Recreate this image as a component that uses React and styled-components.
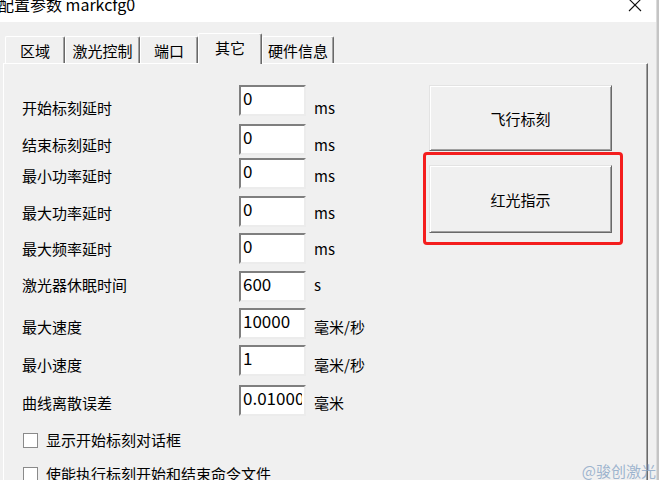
import React from 'react';
import styled, { createGlobalStyle } from 'styled-components';

const GlobalStyle = createGlobalStyle`
  html, body {
    margin: 0;
    padding: 0;
    background: #c4c4c4;
  }

  body {
    font-family: "Noto Sans CJK SC", "Noto Sans", sans-serif;
    color: #000;
  }
`;

const TABS = ['区域', '激光控制', '端口', '其它', '硬件信息'];
const TAB_WIDTHS = [60, 75, 58, 64, 72];
const ACTIVE_TAB = 3;

// mt = space above the row, dy = how far the label sits below the box centre
const ROWS = [
  { label: '开始标刻延时', value: '0', unit: 'ms', mt: 21, dy: 7 },
  { label: '结束标刻延时', value: '0', unit: 'ms', mt: 8, dy: 5 },
  { label: '最小功率延时', value: '0', unit: 'ms', mt: 3, dy: 2 },
  { label: '最大功率延时', value: '0', unit: 'ms', mt: 7, dy: 1 },
  { label: '最大频率延时', value: '0', unit: 'ms', mt: 6, dy: 0 },
  { label: '激光器休眠时间', value: '600', unit: 's', mt: 7, dy: -2 },
  { label: '最大速度', value: '10000', unit: '毫米/秒', mt: 6, dy: 3 },
  { label: '最小速度', value: '1', unit: '毫米/秒', mt: 6, dy: 4 },
  { label: '曲线离散误差', value: '0.010000', unit: '毫米', mt: 9, dy: 2 },
];

const CHECKS = [
  { label: '显示开始标刻对话框', mt: 16 },
  { label: '使能执行标刻开始和结束命令文件', mt: 18 },
];

const App = () => {
  return (
    <>
      <GlobalStyle />
      <Screen>
        <Window>
          <TitleBar>
            <Title>配置参数 markcfg0</Title>
            <CloseIcon viewBox="0 0 14 14">
              <path d="M1 1 L13 13 M13 1 L1 13" stroke="#111" strokeWidth="1.1" />
            </CloseIcon>
          </TitleBar>

          <Body>
            <TabStrip>
              {TABS.map((tab, i) => (
                <Tab key={tab} $active={i === ACTIVE_TAB} $width={TAB_WIDTHS[i]}>
                  {tab}
                </Tab>
              ))}
            </TabStrip>

            <TabPanel>
              <FormColumn>
                {ROWS.map((row) => (
                  <FieldRow key={row.label} $mt={row.mt}>
                    <FieldLabel $dy={row.dy}>{row.label}</FieldLabel>
                    <FieldInput readOnly defaultValue={row.value} />
                    <FieldUnit $dy={row.dy}>{row.unit}</FieldUnit>
                  </FieldRow>
                ))}

                {CHECKS.map((check) => (
                  <CheckRow key={check.label} $mt={check.mt}>
                    <CheckBox />
                    <CheckLabel>{check.label}</CheckLabel>
                  </CheckRow>
                ))}
              </FormColumn>

              <SideColumn>
                <ActionButton $height={66}>飞行标刻</ActionButton>
                <ActionButton $height={68}>红光指示</ActionButton>
                <HighlightFrame />
              </SideColumn>
            </TabPanel>
          </Body>
        </Window>

        <Watermark>@骏创激光</Watermark>
      </Screen>
    </>
  );
};

const Screen = styled.div`
  position: relative;
  width: 659px;
  height: 480px;
  overflow: hidden;
`;

const Window = styled.div`
  width: 656px;
  height: 480px;

  display: flex;
  flex-direction: column;

  background: #f0f0f0;
  border-right: 1px solid #dcdcdc;
`;

const TitleBar = styled.div`
  height: 22px;
  flex-shrink: 0;

  display: flex;
  justify-content: space-between;
  align-items: flex-start;

  background: #ffffff;
`;

const Title = styled.div`
  margin: -5px 0 0 -2px;

  font-size: 16px;
  line-height: 18px;
  white-space: nowrap;
`;

const CloseIcon = styled.svg`
  width: 14px;
  height: 14px;
  margin: -2px 14px 0 0;
`;

const Body = styled.div`
  flex: 1;
  padding-top: 11px;
`;

const TabStrip = styled.div`
  height: 30px;
  padding-left: 5px;

  display: flex;
  align-items: flex-end;
`;

const Tab = styled.div`
  position: relative;
  z-index: ${({ $active }) => ($active ? 2 : 1)};
  width: ${({ $width }) => $width}px;
  height: ${({ $active }) => ($active ? 31 : 27)}px;
  margin-bottom: ${({ $active }) => ($active ? -1 : 0)}px;
  box-sizing: border-box;

  display: flex;
  align-items: center;
  justify-content: center;

  font-size: 15px;
  background: #f0f0f0;
  border-top: 1px solid #ffffff;
  border-left: 1px solid #ffffff;
  border-right: 1px solid #696969;
  border-radius: 2px 2px 0 0;
  box-shadow: inset -1px 0 #a0a0a0;
  padding-bottom: ${({ $active }) => ($active ? 4 : 0)}px;
`;

const TabPanel = styled.div`
  width: 645px;
  height: 430px;
  margin-left: 3px;
  box-sizing: border-box;
  padding-left: 18px;

  display: flex;

  border-top: 1px solid #ffffff;
  border-left: 1px solid #ffffff;
  border-right: 1px solid #696969;
  box-shadow: inset -1px 0 #a0a0a0;
`;

const FormColumn = styled.div`
  width: 407px;

  display: flex;
  flex-direction: column;
`;

const FieldRow = styled.div`
  height: 31px;
  margin-top: ${({ $mt }) => $mt}px;

  display: flex;
  align-items: center;
`;

const FieldLabel = styled.div`
  width: 217px;
  flex-shrink: 0;

  font-size: 15px;
  line-height: 16px;
  transform: translateY(${({ $dy }) => $dy}px);
`;

const FieldInput = styled.input`
  width: 67px;
  height: 31px;
  box-sizing: border-box;
  padding: 0 2px 7px 2px;
  flex-shrink: 0;

  font-family: "Noto Sans CJK SC", "Noto Sans", sans-serif;
  font-size: 17px;
  color: #000;
  background: #ffffff;
  border: 2px solid;
  border-color: #7f7f7f #ececec #ececec #7f7f7f;
  outline: none;
`;

const FieldUnit = styled.div`
  margin-left: 8px;

  font-size: 15px;
  line-height: 16px;
  white-space: nowrap;
  transform: translateY(${({ $dy }) => $dy}px);
`;

const CheckRow = styled.div`
  margin-top: ${({ $mt }) => $mt}px;

  display: flex;
  align-items: center;
  gap: 8px;
`;

const CheckBox = styled.div`
  width: 15px;
  height: 15px;
  margin-left: 1px;
  box-sizing: border-box;

  background: #ffffff;
  border: 1px solid #8a8a8a;
`;

const CheckLabel = styled.div`
  font-size: 15px;
  line-height: 16px;
`;

const SideColumn = styled.div`
  position: relative;
  width: 183px;
  padding-top: 21px;

  display: flex;
  flex-direction: column;
  gap: 14px;
`;

const ActionButton = styled.div`
  height: ${({ $height }) => $height}px;
  box-sizing: border-box;

  display: flex;
  align-items: center;
  justify-content: center;

  font-size: 15px;
  background: #f0f0f0;
  border: 1px solid;
  border-color: #e3e3e3 #696969 #696969 #e3e3e3;
  box-shadow: inset 1px 1px #ffffff, inset -1px -1px #a0a0a0;
`;

const HighlightFrame = styled.div`
  position: absolute;
  top: 88px;
  left: -6px;
  width: 200px;
  height: 93px;
  box-sizing: border-box;

  border: 3px solid #f41e1e;
  border-radius: 4px;
  pointer-events: none;
`;

const Watermark = styled.div`
  position: absolute;
  right: 3px;
  bottom: 0;

  font-size: 15px;
  line-height: 18px;
  color: rgba(130, 160, 195, 0.75);
`;

export default App;
